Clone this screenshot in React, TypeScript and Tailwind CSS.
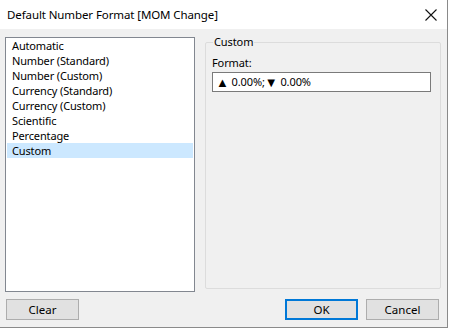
import { useState } from 'react'

const formats = [
  'Automatic',
  'Number (Standard)',
  'Number (Custom)',
  'Currency (Standard)',
  'Currency (Custom)',
  'Scientific',
  'Percentage',
  'Custom',
]

function CloseIcon() {
  return (
    <svg width="12" height="12" viewBox="0 0 12 12" className="text-[#111]">
      <path d="M0.5 0.5 L11.5 11.5 M11.5 0.5 L0.5 11.5" stroke="currentColor" strokeWidth="1.1" fill="none" />
    </svg>
  )
}

function DialogButton({ label, primary }: { label: string; primary?: boolean }) {
  return (
    <button
      className={
        primary
          ? 'w-[73px] h-[21px] bg-[#e1e1e1] border-2 border-[#0078d7] text-[11.5px] text-black leading-none'
          : 'w-[73px] h-[21px] bg-[#e1e1e1] border border-[#adadad] text-[11.5px] text-black leading-none'
      }
    >
      {label}
    </button>
  )
}

export default function App() {
  const [selected, setSelected] = useState('Custom')

  return (
    <div className="w-[450px] h-[330px] bg-white font-['Segoe_UI','Noto_Sans',sans-serif]">
      <div className="w-[448px] h-[328px] flex flex-col border-r border-b border-[#8a8a8a] bg-[#f0f0f0]">
        {/* Title bar */}
        <div className="h-[29px] bg-white flex items-center justify-between pl-[7px] pr-[10px] shrink-0">
          <span className="text-[11.5px] text-black tracking-[-0.1px]">Default Number Format [MOM Change]</span>
          <CloseIcon />
        </div>

        {/* Body */}
        <div className="flex gap-[10px] pl-[5px] pt-[8px]">
          {/* Format list */}
          <div className="w-[190px] h-[255px] bg-white border border-[#828790] px-[1px]">
            {formats.map((f) => (
              <div
                key={f}
                onClick={() => setSelected(f)}
                className={
                  selected === f
                    ? 'h-[15px] flex items-center pl-[5px] text-[11px] leading-[15px] tracking-[-0.15px] text-black bg-[#cce8ff]'
                    : 'h-[15px] flex items-center pl-[5px] text-[11px] leading-[15px] tracking-[-0.15px] text-black'
                }
              >
                {f}
              </div>
            ))}
          </div>

          {/* Custom group */}
          <fieldset className="w-[236px] h-[254px] border border-[#dcdcdc] rounded-[2px] px-[6px] -mt-[2px]">
            <legend className="ml-[1px] px-[1px] text-[11px] text-black leading-[14px] tracking-[-0.1px]">Custom</legend>
            <div className="text-[11px] text-black leading-[14px] mt-[7px] tracking-[-0.1px]">Format:</div>
            <div className="mt-[2px] w-[219px] h-[20px] bg-white border border-[#7a7a7a] flex items-center pl-[3px] text-[11px] text-black tracking-[-0.1px] whitespace-pre">
              <span className="text-[13px] leading-none">▲</span> 0.00%;<span className="text-[13px] leading-none">▼</span> 0.00%
            </div>
          </fieldset>
        </div>

        {/* Buttons */}
        <div className="flex items-center pl-[6px] pr-[8px] mt-[7px]">
          <DialogButton label="Clear" />
          <div className="flex-1" />
          <div className="flex gap-[8px]">
            <DialogButton label="OK" primary />
            <DialogButton label="Cancel" />
          </div>
        </div>
      </div>
    </div>
  )
}
